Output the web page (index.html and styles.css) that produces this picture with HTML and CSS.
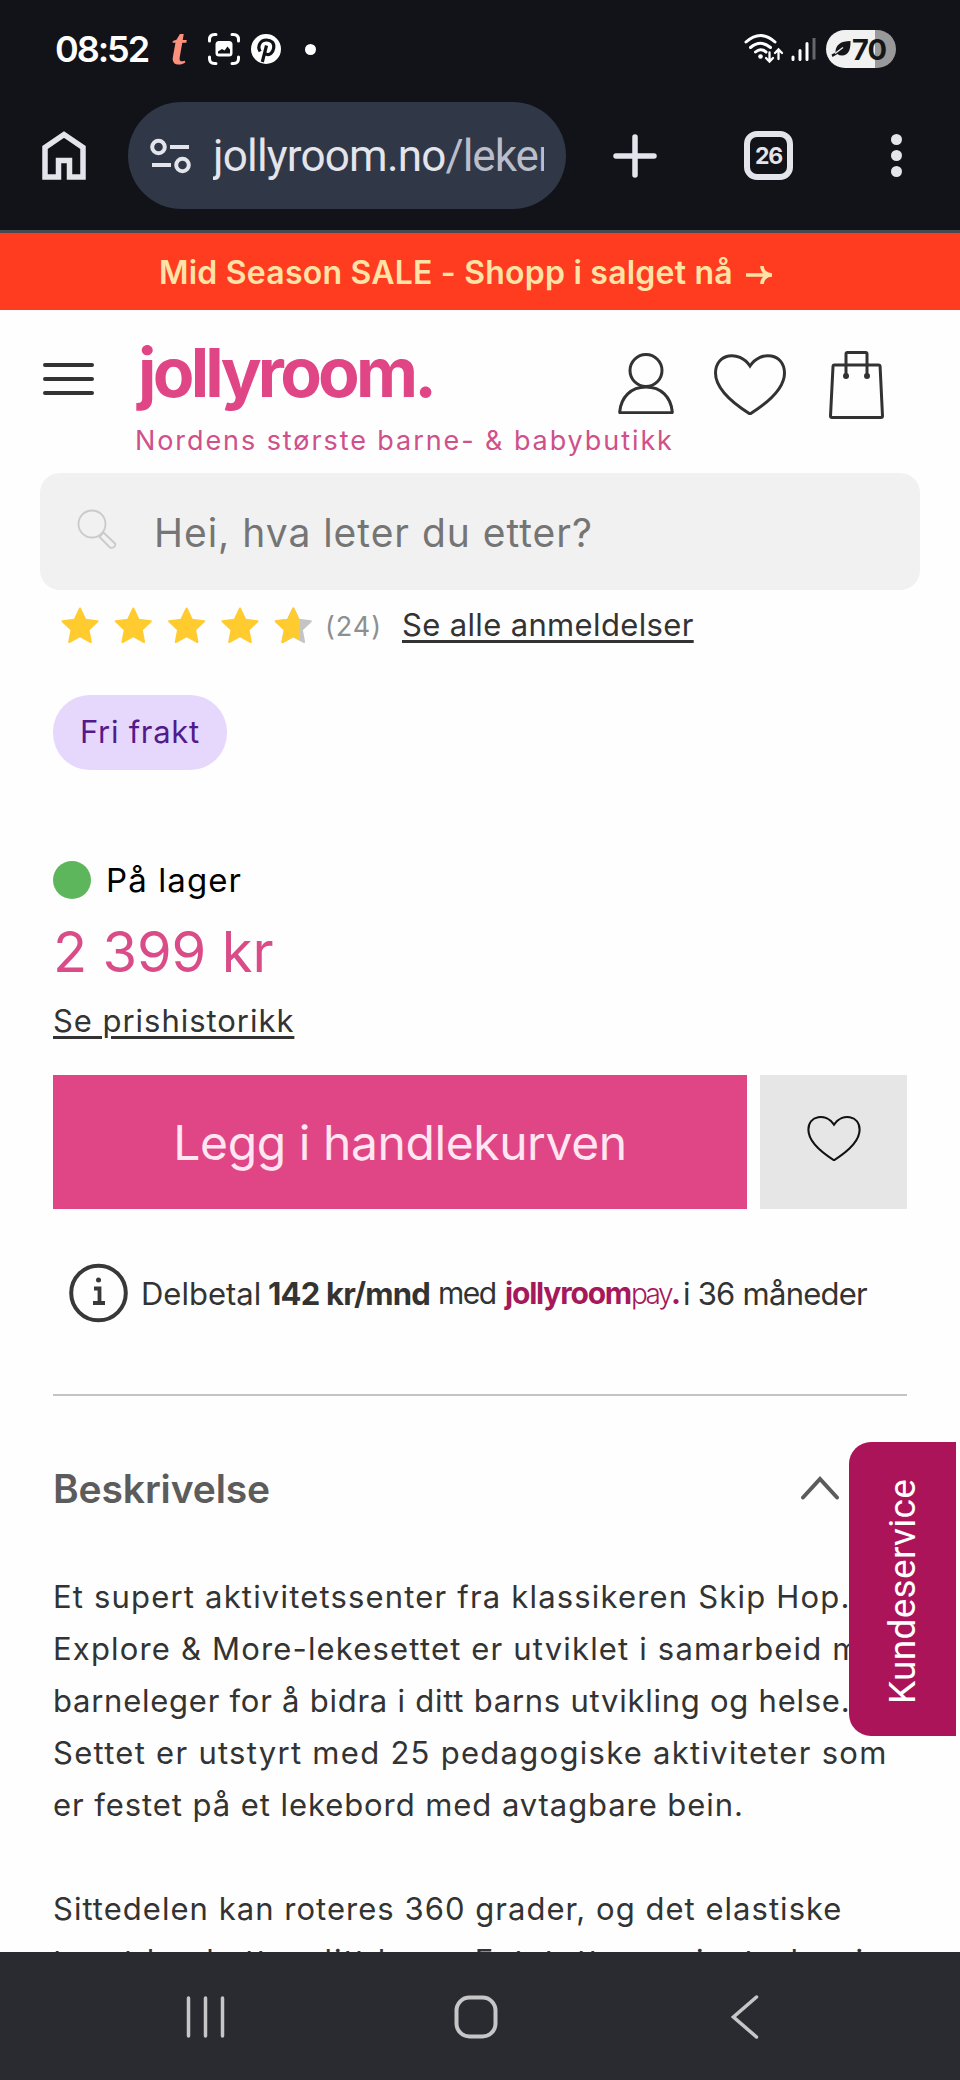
FILE: index.html
```html
<!DOCTYPE html>
<html lang="no">
<head>
<meta charset="utf-8">
<title>Jollyroom</title>
<link rel="stylesheet" href="styles.css">
</head>
<body>
<div class="status">
  <span class="time">08:52</span>
  <span class="tglyph">t</span>
  <svg class="shot" width="32" height="32" viewBox="0 0 32 32" fill="none" stroke="#fff" stroke-width="3" stroke-linecap="round"><path d="M1.500 8V6.500q0-5 5-5H8M24 1.500h1.500q5 0 5 5V8M30.500 24v1.500q0 5-5 5H24M8 30.500H6.500q-5 0-5-5V24"/><rect x="7.500" y="8" width="17" height="15.500" rx="3.500" fill="#fff" stroke="none"/><path d="M10 20.500v-2l4-2.500 2.500 1.500 3-4 2.500 3v4z" fill="#111318" stroke="none"/></svg>
  <svg class="pin" width="30" height="30" viewBox="0 0 30 30"><circle cx="15" cy="15" r="15" fill="#fff"/><path d="M9.200 17.500C5.800 12 9.500 6 15.500 6c5 0 8 3.200 7.200 8-.8 5-4 7-6.500 6.500-1.500-.3-2.200-1.500-2.200-1.500M15.500 11.500L11.300 28" fill="none" stroke="#111318" stroke-width="3.200"/></svg>
  <span class="dot"></span>
  <svg class="net" width="74" height="34" viewBox="0 0 74 34" fill="none" stroke="#fff" stroke-width="3" stroke-linecap="round"><path d="M2 10q14.500-13 29 0M6.500 15.500q10-8.500 20 0M11.500 20q5-4.500 10.500 0"/><circle cx="16.500" cy="24.500" r="2.300" fill="#fff" stroke="none"/><path d="M25.500 20.500v8M22 26l3.500 3.500L29 26M34.500 27v-8.500M31 21l3.500-3.500L38 21" stroke-width="2.300"/><path d="M49 25v2.500M56 18.500v9M63 11.500v16"/><path d="M70 6v21.500" stroke="#66676b" stroke-linecap="butt"/></svg>
  <div class="battery"><svg width="20" height="18" viewBox="0 0 20 18"><path d="M19.500 1q.5 14-8.500 14.500-3 0-4.500-1.500L1.500 17l-1-2.500 4-2Q4.500 1 19.500 1z" fill="#15161a"/><path d="M4 13.500l8-6" stroke="#f1f1f1" stroke-width="1.400"/></svg><span>70</span></div>
</div>
<div class="toolbar">
  <svg class="home" width="44" height="49" viewBox="0 0 44 49"><path d="M3 46V16.500L22 3.500 41 16.500V46H27.500V29.500h-11V46z" fill="none" stroke="#e3e4ec" stroke-width="5.500"/></svg>
  <div class="pill">
    <svg width="42" height="36" viewBox="0 0 42 36" fill="none" stroke="#e3e4ec" stroke-width="4"><circle cx="8.500" cy="9" r="6.300"/><path d="M20 9h19M2 27h19"/><circle cx="32.500" cy="27" r="6.300"/></svg>
    <div class="url"><span>jollyroom.no</span><span class="path">/leker</span></div>
  </div>
  <svg class="plus" width="44" height="44" viewBox="0 0 44 44"><path d="M22 3v38M3 22h38" stroke="#e3e4ec" stroke-width="5.500" stroke-linecap="round"/></svg>
  <div class="tabs"><span>26</span></div>
  <div class="more"><i></i><i></i><i></i></div>
</div>
<div class="banner"><span>Mid Season SALE - Shopp i salget nå</span><svg width="28" height="20" viewBox="0 0 28 20" fill="none" stroke="#ffe3a6" stroke-width="3.600"><path d="M0 10h25M16 1c0 5 4 9 10 9-6 0-10 4-10 9"/></svg></div>
<main class="page">
  <header class="header">
    <div class="menu"><i></i><i></i><i></i></div>
    <div class="brand"><div class="logo">jollyroom.</div><div class="tagline">Nordens største barne- &amp; babybutikk</div></div>
    <div class="icons">
      <svg width="56" height="61" viewBox="0 0 56 61" fill="none" stroke="#323232" stroke-width="3" stroke-linejoin="round"><circle cx="28" cy="17.500" r="16"/><path d="M1.700 59C3 44 13 34 28 34s25 10 26.300 25q0 .8-1 .8H2.500q-.8 0-.8-.8z"/></svg>
      <svg width="72" height="62" viewBox="0 0 72 62" fill="none" stroke="#323232" stroke-width="3"><path d="M36 13C25-3.500 1.500.5 1.500 20c0 13 13 27.500 34.500 41C57.500 47.500 70.500 33 70.500 20 70.500.5 47-3.500 36 13z"/></svg>
      <svg width="55" height="68" viewBox="0 0 55 68" fill="none" stroke="#323232" stroke-width="3" stroke-linejoin="round"><path d="M5.500 14h44q1.500 0 1.600 1.500L53.500 65q0 1.500-1.500 1.500H3q-1.500 0-1.500-1.500L4 15.500Q4 14 5.500 14zM17 25V3q0-1.500 1.500-1.500h18Q38 1.500 38 3v22"/><circle cx="17" cy="25" r="1.500"/><circle cx="38" cy="25" r="1.500"/></svg>
    </div>
  </header>
  <div class="search">
    <svg width="40" height="40" viewBox="0 0 40 40" fill="none" stroke="#cacaca" stroke-width="1.800"><circle cx="15" cy="15" r="13.500"/><path d="M22.500 28l4-4.500L38 34.500q1 2-1 3.500t-4 .5z" stroke-linejoin="round"/></svg>
    <span>Hei, hva leter du etter?</span>
  </div>
  <section class="product">
    <div class="rating">
      <svg width="254" height="38" viewBox="0 0 254 38">
        <defs><path id="star" d="M19 1.500l5.300 11.200 12.200 1.600-9 8.500 2.300 12.200L19 29.200 8.200 35l2.300-12.200-9-8.500 12.200-1.600z" stroke-width="2" stroke-linejoin="round"/><clipPath id="part"><rect x="213" y="0" width="26" height="38"/></clipPath></defs>
        <g fill="#ffcb2e" stroke="#ffcb2e"><use href="#star"/><use href="#star" x="53.300"/><use href="#star" x="106.600"/><use href="#star" x="160"/></g>
        <use href="#star" x="213.300" fill="#c4c4c4" stroke="#c4c4c4"/>
        <g clip-path="url(#part)"><use href="#star" x="213.300" fill="#ffcb2e" stroke="#ffcb2e"/></g>
      </svg>
      <span class="count">(24)</span>
      <a class="link">Se alle anmeldelser</a>
    </div>
    <div class="badge">Fri frakt</div>
    <div class="stock"><i></i><span>På lager</span></div>
    <div class="price">2 399 kr</div>
    <div class="history"><a class="link">Se prishistorikk</a></div>
    <div class="buy">
      <button class="cart">Legg i handlekurven</button>
      <button class="fav"><svg width="54" height="46" viewBox="0 0 72 62" fill="none" stroke="#111" stroke-width="2.800"><path d="M36 13C25-3.500 1.500.5 1.500 20c0 13 13 27.500 34.500 41C57.500 47.500 70.500 33 70.500 20 70.500.5 47-3.500 36 13z"/></svg></button>
    </div>
    <div class="pay">
      <svg width="59" height="60" viewBox="0 0 59 60" fill="none" stroke="#383838" stroke-width="4"><circle cx="29.500" cy="30" r="27.300"/><path d="M25 25.500h5.500V40M24 40h12" stroke-width="3.800"/><circle cx="29.500" cy="17" r="2.500" fill="#383838" stroke="none"/></svg>
      <span class="intro">Delbetal</span><b class="amount">142 kr/mnd</b><span class="with">med</span><span class="paylogo"><b class="bold">jollyroom</b><span class="thin">pay</span><b>.</b></span><span class="months">i 36 måneder</span>
    </div>
    <hr class="rule">
    <div class="acc"><h2>Beskrivelse</h2><svg width="38" height="24" viewBox="0 0 38 24" fill="none" stroke="#5c5c5c" stroke-width="4" stroke-linecap="round"><path d="M2 21.500L19 3l17 18.500"/></svg></div>
    <p class="desc">
      <span class="row r1">Et supert aktivitetssenter fra klassikeren Skip Hop.</span>
      <span class="row r2">Explore &amp; More-lekesettet er utviklet i samarbeid med</span>
      <span class="row r3">barneleger for å bidra i ditt barns utvikling og helse.</span>
      <span class="row r4">Settet er utstyrt med 25 pedagogiske aktiviteter som</span>
      <span class="row r5">er festet på et lekebord med avtagbare bein.</span>
    </p>
    <p class="desc next">
      <span class="row r6">Sittedelen kan roteres 360 grader, og det elastiske</span>
      <span class="row r7">tøyet beskytter ditt barn. Fotstøtten er justerbar i</span>
    </p>
  </section>
</main>
<nav class="nav">
  <svg width="40" height="42" viewBox="0 0 40 42" stroke="#c6c6c8" stroke-width="3.500" stroke-linecap="round"><path d="M2.500 2v38M19.500 2v38M36.500 2v38"/></svg>
  <svg width="44" height="44" viewBox="0 0 44 44" fill="none" stroke="#c6c6c8" stroke-width="4"><rect x="2.500" y="2.500" width="39" height="39" rx="13"/></svg>
  <svg width="28" height="44" viewBox="0 0 28 44" fill="none" stroke="#c6c6c8" stroke-width="3.500" stroke-linecap="round"><path d="M25.500 2L2.500 22l23 20"/></svg>
</nav>
<aside class="service">Kundeservice</aside>
</body>
</html>
```
FILE: styles.css
```css
* { box-sizing: border-box; }
body { margin: 0; width: 960px; height: 2080px; display: flex; flex-direction: column; overflow: hidden; position: relative; background: #fefefe; color: #333; font-family: Inter, "Liberation Sans", sans-serif; font-size: 31px; white-space: nowrap; }
svg { display: block; flex: none; }
p, h2 { margin: 0; }
a, span, b, h2 { flex: none; }

.status { height: 98px; flex: none; background: #111318; color: #fff; display: flex; align-items: center; padding: 0 64px 0 55px; }
.time { width: 94px; font-size: 36px; font-weight: 600; letter-spacing: -2.07px; }
.tglyph { width: 24px; margin-left: 22px; margin-top: -5px; font: italic bold 52px/50px "Liberation Serif", serif; color: #fb907c; }
.shot { margin-left: 13px; }
.pin { margin-left: 11px; }
.dot { width: 11px; height: 11px; border-radius: 50%; background: #fff; margin-left: 24px; }
.net { margin-left: auto; }
.battery { margin-left: 8px; width: 70px; height: 38px; border-radius: 19px; background: linear-gradient(90deg, #f1f1f1 49px, #999 49px); display: flex; align-items: center; padding-left: 5px; font-size: 29px; font-weight: 700; letter-spacing: -.98px; color: #15161a; gap: 1px; }

.toolbar { height: 135px; flex: none; background: #111318; border-bottom: 3px solid #48494e; display: flex; align-items: center; padding: 0 58px 17px 42px; color: #e3e4ec; }
.pill { margin-left: 42px; width: 438px; height: 107px; border-radius: 54px; background: #303746; display: flex; align-items: center; padding-left: 22px; }
.url { margin-left: 21px; width: 331px; overflow: hidden; display: flex; font: 44px/60px Roboto, sans-serif; letter-spacing: -.8px; }
.path { color: #bbbdcb; letter-spacing: -1px; }
.plus { margin-left: 47px; }
.tabs { margin-left: 87px; width: 49px; height: 49px; border: 6px solid #e3e4ec; border-radius: 13px; display: flex; align-items: center; justify-content: center; font-size: 23px; font-weight: 700; letter-spacing: -1.2px; }
.more { margin-left: auto; display: flex; flex-direction: column; gap: 5px; }
.more i { width: 11px; height: 11px; border-radius: 50%; background: #e3e4ec; }

.banner { height: 77px; flex: none; background: #ff3b20; color: #ffe3a6; display: flex; align-items: center; padding: 2px 0 0 159px; font-size: 32px; font-weight: 600; letter-spacing: .22px; gap: 13px; }
.banner svg { margin-top: 5px; }

.page { flex: 1; min-height: 0; overflow: hidden; }
.header { height: 163px; display: flex; align-items: flex-start; padding-left: 43px; }
.menu { width: 51px; margin-top: 53px; display: flex; flex-direction: column; gap: 10px; }
.menu i { height: 4px; border-radius: 2px; background: #333; }
.brand { width: 482px; margin-left: 41px; padding-top: 28px; color: #e04585; }
.logo { margin-left: 3px; font-size: 68px; line-height: 68px; font-weight: 700; letter-spacing: -3.75px; }
.tagline { margin-top: 18px; line-height: 33px; font-size: 27px; letter-spacing: 1.92px; color: #d0508a; }
.icons { display: flex; align-items: flex-start; padding-left: 1px; }
.icons svg:nth-child(1) { margin-top: 43px; }
.icons svg:nth-child(2) { margin: 43px 0 0 40px; }
.icons svg:nth-child(3) { margin: 41px 0 0 43px; }

.search { margin: 0 40px; height: 117px; border-radius: 20px; background: #f1f1f1; display: flex; align-items: center; padding: 2px 0 0 37px; gap: 37px; font-size: 39px; letter-spacing: .97px; color: #757575; }
.search svg { margin-top: -7px; }

.product { padding: 0 53px; }
.rating { height: 72px; display: flex; align-items: center; padding-left: 8px; }
.count { width: 57px; margin-left: 10px; font-size: 27px; letter-spacing: .95px; color: #8f8f8f; }
.link { text-decoration: underline; text-decoration-thickness: 3px; text-underline-offset: 4px; color: #333; }
.rating .link { margin: -4px 0 0 20px; letter-spacing: .35px; }
.badge { width: 174px; height: 75px; margin-top: 33px; border-radius: 37px; background: #e5d8fc; color: #541a8b; display: flex; align-items: center; padding: 0 0 2px 27px; letter-spacing: .72px; }
.stock { height: 40px; margin-top: 90px; display: flex; align-items: center; color: #000; font-size: 33px; letter-spacing: 1.1px; gap: 15px; }
.stock i { width: 38px; height: 38px; border-radius: 50%; background: #5eb65c; }
.price { height: 60px; margin-top: 22px; line-height: 60px; font-size: 56px; letter-spacing: -.15px; color: #d94c87; }
.history { height: 40px; margin-top: 19px; line-height: 40px; letter-spacing: .96px; }
.buy { margin-top: 34px; display: flex; gap: 13px; }
.buy button { border: 0; padding: 0; height: 134px; display: flex; align-items: center; justify-content: center; }
.buy .cart { width: 694px; background: #e04585; color: #ffe6f1; font: 48px Inter, sans-serif; letter-spacing: -.42px; }
.buy .fav { width: 147px; background: #e6e6e6; }
.fav svg { margin-top: -8px; }
.pay { height: 60px; margin-top: 54px; display: flex; align-items: center; padding-left: 16px; }
.intro { width: 127px; margin-left: 13px; }
.amount { width: 170px; letter-spacing: -.8px; }
.with { width: 67px; font-size: 30px; letter-spacing: -1.5px; }
.paylogo { width: 178px; color: #a5195c; display: flex; align-items: baseline; font-size: 30px; }
.bold { letter-spacing: -1.2px; }
.thin { font-size: 28px; font-weight: 300; letter-spacing: -2.6px; }
.months { letter-spacing: -.75px; }
.rule { border: 0; height: 2px; margin: 71px 0 0; background: #c4c4c4; }
.acc { height: 48px; margin-top: 68px; display: flex; align-items: center; padding-right: 68px; justify-content: space-between; }
.acc h2 { font-size: 39px; font-weight: 600; letter-spacing: -.13px; color: #5c5c5c; }
.desc { margin-top: 59px; line-height: 52px; }
.desc.next { margin-top: 52px; }
.row { display: block; }
.r1 { letter-spacing: 1.18px; }
.r2 { letter-spacing: 1.17px; }
.r3 { letter-spacing: .75px; }
.r4 { letter-spacing: 1.28px; }
.r5 { letter-spacing: .93px; }
.r6 { letter-spacing: 1.03px; }
.r7 { letter-spacing: 2.02px; }

.nav { height: 128px; flex: none; background: #2a2b30; display: flex; align-items: center; padding: 2px 201px 0 186px; justify-content: space-between; }
.nav svg:nth-child(2) { margin-right: 6px; }
.service { position: absolute; left: 849px; top: 1442px; width: 107px; height: 294px; border-radius: 0 22px 22px 0; background: #ab1459; color: #fff; writing-mode: vertical-rl; transform: rotate(180deg); display: flex; align-items: center; justify-content: center; padding-bottom: 5px; font: 400 37px Roboto, sans-serif; letter-spacing: .3px; }
```
